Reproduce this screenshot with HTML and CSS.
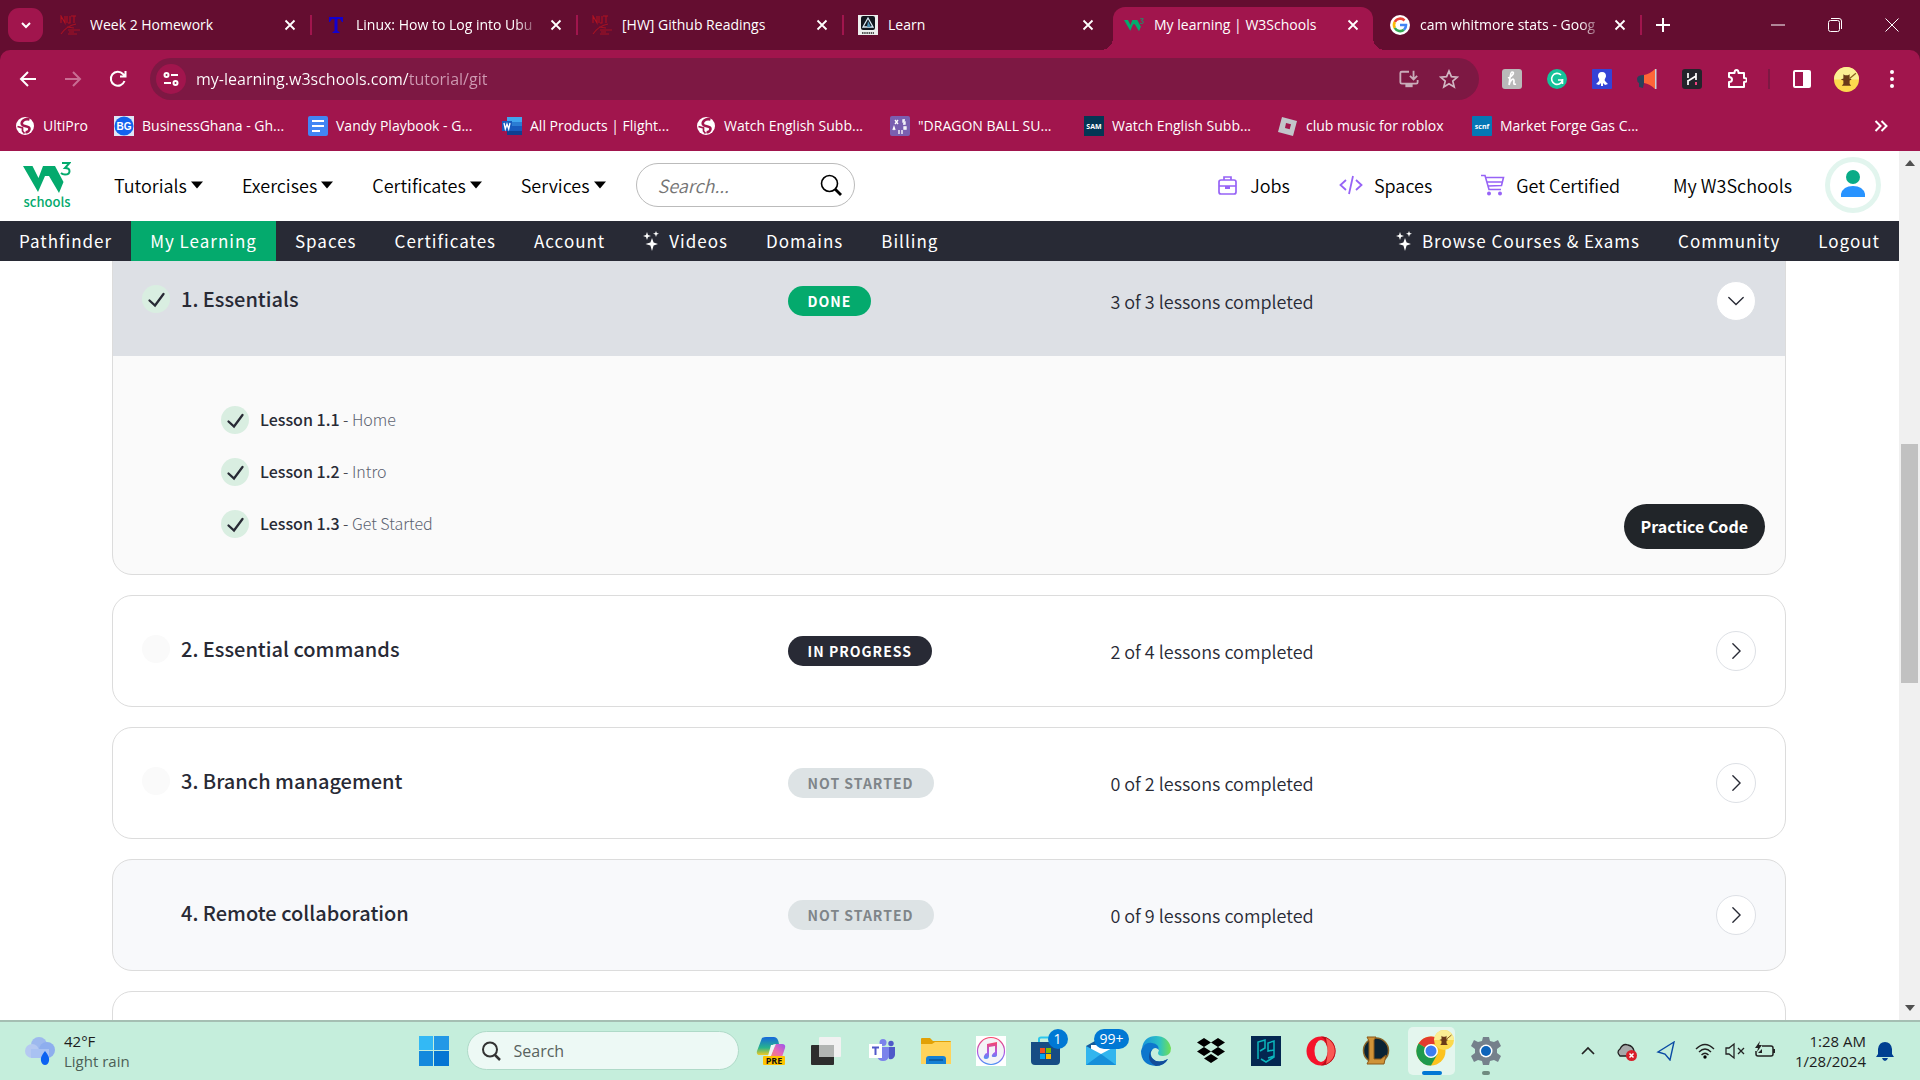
FILE: index.html
```html
<!DOCTYPE html>
<html lang="en">
<head>
<meta charset="utf-8">
<title>My learning | W3Schools</title>
<link rel="stylesheet" href="styles.css">
</head>
<body>
<svg class="defs" aria-hidden="true">
  <symbol id="close" viewBox="0 0 12 12"><path d="M1.5 1.5l9 9M10.500 1.500l-9 9" stroke="#fff" stroke-width="1.8" fill="none"/></symbol>
  <symbol id="check" viewBox="0 0 28 28"><circle cx="14" cy="14" r="14" fill="#d9eee1"/><path d="M7.500 15.500l5.500 5 8.500-11.500" stroke="#282a35" stroke-width="2.300" fill="none" stroke-linecap="round"/></symbol>
  <symbol id="right" viewBox="0 0 20 20"><path d="M6.500 2l8 8-8 8" stroke="#282a35" stroke-width="1.500" fill="none" stroke-linecap="round"/></symbol>
  <symbol id="down" viewBox="0 0 20 20"><path d="M2 6l8 8 8-8" stroke="#282a35" stroke-width="1.500" fill="none" stroke-linecap="round"/></symbol>
  <symbol id="caret" viewBox="0 0 12 8"><path d="M0 .5h12L6 7.500z"/></symbol>
  <symbol id="sparkle" viewBox="0 0 16 20"><path d="M9 7l1.600 4.400L15 13l-4.400 1.600L9 20l-1.600-5.400L2.500 13l4.900-1.600zM4 1l1 3 3 1-3 1-1 3-1-3-3-1 3-1zM13 0l.8 2 2.200.8-2.200.8L13 6l-.8-2.400L10 2.800l2.200-.8z" fill="#fff"/></symbol>
  <symbol id="globe" viewBox="0 0 20 20"><circle cx="10" cy="10" r="9" fill="#fff"/><path d="M14.500 3.500C9 2 6 6 7 8.500s8 1 7.500 4.500c-.3 2-2 3.500-4 3" stroke="#a1154d" stroke-width="2.600" fill="none"/><path d="M2.500 10.500l5 1.500v3l2 2.500" stroke="#a1154d" stroke-width="1.700" fill="none"/></symbol>
  <symbol id="njit" viewBox="0 0 20 20"><path d="M1 8V1l4 7V1M7 1v7M10 1v7H8M11 1h5M14 1v7" stroke="#b01221" stroke-width="1.100" fill="none"/><path d="M1 19C6 12 10 10 16 9M7 12l7 1M8 15l12 0M8 19h9M9 17h5" stroke="#a51222" stroke-width="1.100" fill="none"/></symbol>
  <symbol id="w3" viewBox="0 0 48 32"><path d="M0 4h9.500l6 12 4.500-12h12l8.500 16-4.500 11L26 14h-4L15 30z"/><path d="M39 1h7.500L42 6q4.500 0 4.500 3.200T42 12.500q-2.500 0-4-1.500" fill="none" stroke="#04aa6d" stroke-width="2"/></symbol>
  <symbol id="beaver" viewBox="0 0 24 24"><circle cx="12" cy="12" r="12" fill="#fcd94d"/><path d="M0 12a12 12 0 0 1 24 0z" fill="#fbef94"/><path d="M9 7l1.500 1h3L15 7v4l2 1-2 1v3l1.500 2h-9L9 16v-3l-2.500-1L9 11z" fill="#693a18"/><path d="M15 11l6-5" stroke="#8c6120" stroke-width="1.200"/></symbol>
</svg>

<header class="browser">
  <div class="tabstrip">
    <button class="tabsearch" aria-label="Search tabs"><svg viewBox="0 0 12 12" width="12" height="12"><path d="M2 4l4 4 4-4" stroke="#fff" stroke-width="2" fill="none"/></svg></button>
    <div class="tab"><svg class="fav"><use href="#njit"/></svg><span class="tabtitle">Week 2 Homework</span><button class="x" aria-label="Close tab"><svg><use href="#close"/></svg></button></div>
    <div class="tab"><svg class="fav" viewBox="0 0 20 20"><path d="M3 2h14v5h-1l-2-3h-2.500v12l2 1v1h-7v-1l2-1V4H6L4 7H3z" fill="#1200d0"/></svg><span class="tabtitle fade">Linux: How to Log into Ubu</span><button class="x" aria-label="Close tab"><svg><use href="#close"/></svg></button></div>
    <div class="tab"><svg class="fav"><use href="#njit"/></svg><span class="tabtitle">[HW] Github Readings</span><button class="x" aria-label="Close tab"><svg><use href="#close"/></svg></button></div>
    <div class="tab before"><svg class="fav" viewBox="0 0 20 20"><path fill="#eee" d="M0 0h20v20H0z"/><rect x="3" y="1" width="14" height="14" rx="2" fill="#11161e"/><path d="M10 3l5 9H5z" fill="none" stroke="#d8e9f4" stroke-width="1.300"/><path d="M10 6l3 6h-4z" fill="#4b91b7"/><path d="M4 18h12" stroke="#222" stroke-width="1.500" stroke-dasharray="1.500 .7"/></svg><span class="tabtitle">Learn</span><button class="x" aria-label="Close tab"><svg><use href="#close"/></svg></button></div>
    <div class="tab active"><svg class="fav green"><use href="#w3"/></svg><span class="tabtitle">My learning | W3Schools</span><button class="x" aria-label="Close tab"><svg><use href="#close"/></svg></button></div>
    <div class="tab"><svg class="fav" viewBox="0 0 20 20"><circle cx="10" cy="10" r="10" fill="#fff"/><g fill="none" stroke-width="2.600"><path d="M14.500 5.500A6 6 0 0 0 4.800 7" stroke="#ea4335"/><path d="M4.800 7a6 6 0 0 0 0 6" stroke="#fbbc05"/><path d="M4.800 13a6 6 0 0 0 9.200 1.700" stroke="#34a853"/><path d="M14 14.700A6 6 0 0 0 16 10h-6" stroke="#4285f4"/></g></svg><span class="tabtitle fade">cam whitmore stats - Goog</span><button class="x" aria-label="Close tab"><svg><use href="#close"/></svg></button></div>
    <button class="newtab" aria-label="New tab"><svg viewBox="0 0 14 14" width="14" height="14"><path d="M7 0v14M0 7h14" stroke="#fff" stroke-width="2"/></svg></button>
    <div class="winbtns">
      <button aria-label="Minimize"><svg viewBox="0 0 14 14"><path d="M0 7h14" stroke="#fff"/></svg></button>
      <button aria-label="Restore"><svg viewBox="0 0 14 14"><rect x=".5" y="2.500" width="11" height="11" rx="2" fill="none" stroke="#fff"/><path d="M3 .5h8a2.500 2.500 0 0 1 2.500 2.500v8" fill="none" stroke="#fff"/></svg></button>
      <button aria-label="Close"><svg viewBox="0 0 14 14"><path d="M.5.500l13 13M13.500.500l-13 13" stroke="#fff"/></svg></button>
    </div>
  </div>

  <div class="toolbar">
    <button aria-label="Back"><svg viewBox="0 0 20 20"><path d="M18 10H4M10 3l-7 7 7 7" stroke="#fff" stroke-width="2" fill="none"/></svg></button>
    <button aria-label="Forward"><svg viewBox="0 0 20 20"><path d="M2 10h14M10 3l7 7-7 7" stroke="#c96d93" stroke-width="2" fill="none"/></svg></button>
    <button aria-label="Reload"><svg viewBox="0 0 20 20"><path d="M16.500 12A7 7 0 1 1 15 5l2 2M17.500 2v5.500H12" stroke="#fff" stroke-width="2" fill="none"/></svg></button>
    <div class="omnibox">
      <button class="siteinfo" aria-label="Site information"><svg viewBox="0 0 16 16" width="16" height="16"><g fill="none" stroke="#fff" stroke-width="2"><circle cx="3.500" cy="4" r="2"/><path d="M8 4h7M1 12h7"/><circle cx="12.500" cy="12" r="2"/></g></svg></button>
      <input class="url" type="text" aria-label="Address" value="my-learning.w3schools.com/tutorial/git">
      <button aria-label="Install"><svg viewBox="0 0 22 20"><path d="M11 2H3q-1.500 0-1.500 1.500v10Q1.500 15 3 15h16q1.500 0 1.500-1.500V11" stroke="#c9abb9" stroke-width="2" fill="none"/><path d="M7 15h8v4H7z" fill="#c9abb9"/><path d="M16 1v9M12 6.500l4 4 4-4" stroke="#c9abb9" stroke-width="2" fill="none"/></svg></button>
      <button aria-label="Bookmark"><svg viewBox="0 0 20 20"><path d="M10 2l2.400 5.600 6 .5-4.600 4 1.400 5.900-5.200-3.200L4.800 18l1.400-5.900-4.600-4 6-.5z" stroke="#d1b6c2" stroke-width="1.700" fill="none"/></svg></button>
    </div>
    <div class="exts">
      <button aria-label="Honey"><svg viewBox="0 0 20 20"><rect width="20" height="20" rx="3" fill="#b9b9b9"/><path d="M6 9c5-2 7-6 4-6-2 0-2 8-3 13 1-5 5-8 5-4 0 2-1 4 2 3" stroke="#fff" stroke-width="1.700" fill="none"/></svg></button>
      <button aria-label="Grammarly"><svg viewBox="0 0 20 20"><circle cx="10" cy="10" r="10" fill="#15c39a"/><path d="M14 6A5.500 5.500 0 1 0 15.500 11H11M15.500 10v5" stroke="#fff" stroke-width="1.600" fill="none"/></svg></button>
      <button aria-label="Octopus"><svg viewBox="0 0 20 20"><rect width="20" height="20" rx="1" fill="#3443d6"/><path d="M10 3c-3 0-4 2-4 4s2 3 1 5l-3 3 3 1 2-2v3h2v-3l2 2 3-1-3-3c-1-2 1-3 1-5s-1-4-4-4z" fill="#fff"/></svg></button>
      <button aria-label="Announcements"><svg viewBox="0 0 20 20"><path d="M0 10q0-4 7-4v8l-1 5-4-1v-4q-2-1-2-4z" fill="#29415a"/><path d="M7 6q6-1 11-6v20q-5-5-11-6z" fill="#ff6537"/><path d="M18 0h1.500v20H18z" fill="#c8d3dc"/></svg></button>
      <button aria-label="Highlighter"><svg viewBox="0 0 20 20"><rect width="20" height="20" rx="3" fill="#23242b"/><path d="M6 4v5M6 11v5M14 4v7M6 12l8-5" stroke="#fff" stroke-width="1.700"/><path d="M14 13v3" stroke="#ef4381" stroke-width="2"/></svg></button>
      <button aria-label="Extensions"><svg viewBox="0 0 20 20"><path d="M2 4h5.500q0-3 2-3t2 3H17v5q3 0 3 2t-3 2v5H2v-5q3 0 3-2.500T2 8z" stroke="#fff" stroke-width="2" fill="none" stroke-linejoin="round"/></svg></button>
      <i class="vsep"></i>
      <button aria-label="Side panel"><svg viewBox="0 0 20 20"><rect x="2" y="2" width="16" height="16" rx="1" stroke="#fff" stroke-width="2" fill="none"/><path d="M11 2h7v16h-7z" fill="#fff"/></svg></button>
      <button class="profile" aria-label="Profile"><svg><use href="#beaver"/></svg></button>
      <button aria-label="Menu"><svg viewBox="0 0 20 20" fill="#fff"><circle cx="10" cy="3" r="2"/><circle cx="10" cy="10" r="2"/><circle cx="10" cy="17" r="2"/></svg></button>
    </div>
  </div>

  <nav class="bookmarks" aria-label="Bookmarks">
    <a class="short" href="#"><svg><use href="#globe"/></svg>UltiPro</a>
    <a href="#"><svg viewBox="0 0 20 20"><path fill="#dfe6f5" d="M0 0h20v20H0z"/><circle cx="10" cy="10" r="9.500" fill="#1263ee"/><text x="10" y="14" text-anchor="middle" class="bg">BG</text></svg>BusinessGhana - Gh...</a>
    <a href="#"><svg viewBox="0 0 20 20"><rect width="20" height="20" rx="2" fill="#4285f4"/><path d="M4 5h12M4 10h12M4 15h8" stroke="#fff" stroke-width="2.200"/></svg>Vandy Playbook - G...</a>
    <a href="#"><svg viewBox="0 0 20 20"><path fill="#41a5ee" d="M5 1h15v5H5z"/><path fill="#2b7cd3" d="M5 6h15v4H5z"/><path fill="#185abd" d="M5 10h15v5H5z"/><path fill="#103f91" d="M5 15h15v4H5z"/><path fill="#185abd" d="M0 5h10v10H0z"/><path d="M2 7l1.300 6L5 8l1.700 5L8 7" stroke="#fff" stroke-width="1.300" fill="none"/></svg>All Products | Flight...</a>
    <a href="#"><svg><use href="#globe"/></svg>Watch English Subb...</a>
    <a href="#"><svg viewBox="0 0 20 20"><rect width="20" height="20" rx="2" fill="#7a5fb0"/><path d="M5 4l3 4M8 4L5 8M15 4h-2v2h2v2h-2M3 14l1-3 1 3M14 11h2v2h-2zM9 14v4M12 14v4" stroke="#fff" stroke-width="1.300" fill="none"/></svg>"DRAGON BALL SU...</a>
    <a href="#"><svg viewBox="0 0 20 20"><path fill="#043654" d="M0 0h20v20H0z"/><text x="10" y="13" text-anchor="middle" class="sam">SAM</text></svg>Watch English Subb...</a>
    <a href="#"><svg viewBox="0 0 20 20"><path d="M4 1l15 4-4 15-15-4z" fill="#c2c5ca"/><path d="M8 7l5 1.300-1.300 5L7 12z" fill="#a1154d"/></svg>club music for roblox</a>
    <a href="#"><svg viewBox="0 0 20 20"><rect width="20" height="20" rx="1" fill="#0577b5"/><text x="10" y="13" text-anchor="middle" class="sam">scnf</text></svg>Market Forge Gas C...</a>
    <button class="more" aria-label="More bookmarks"><svg viewBox="0 0 14 12" width="14" height="12"><path d="M1.500 1l5 5-5 5M7.500 1l5 5-5 5" stroke="#fff" stroke-width="2" fill="none"/></svg></button>
  </nav>
</header>

<div class="viewport">
  <div class="page">
    <nav class="topnav" aria-label="Main">
      <a class="logo" href="#" aria-label="W3Schools"><svg width="48" height="32"><use href="#w3"/></svg><span>schools</span></a>
      <button class="menu">Tutorials<svg><use href="#caret"/></svg></button>
      <button class="menu">Exercises<svg><use href="#caret"/></svg></button>
      <button class="menu">Certificates<svg><use href="#caret"/></svg></button>
      <button class="menu">Services<svg><use href="#caret"/></svg></button>
      <label class="search"><input type="text" placeholder="Search..." aria-label="Search W3Schools"><svg viewBox="0 0 22 22" width="22" height="22"><circle cx="9.500" cy="9.500" r="8" fill="none" stroke="#000" stroke-width="1.600"/><path d="M15 15l6 6" stroke="#000" stroke-width="2.800"/></svg></label>
      <div class="links">
        <a href="#"><svg viewBox="0 0 22 22" width="22" height="22"><g fill="none" stroke="#9763f6" stroke-width="1.700"><rect x="2" y="6" width="17" height="14" rx="2"/><path d="M7 6V3h7v3M2 12h17"/></g><path d="M8 12h5v3H8z" fill="#9763f6"/></svg>Jobs</a>
        <a href="#"><svg viewBox="0 0 24 20" width="24" height="22"><path d="M7 5L1.500 10 7 15M17 5l5.500 5-5.500 5M14 1l-4 18" fill="none" stroke="#9763f6" stroke-width="1.800"/></svg>Spaces</a>
        <a href="#"><svg viewBox="0 0 24 22" width="24" height="22"><path d="M0 1.500h4l4 14h12M5 3.500h17.500l-2 8L7 12M6 8h15" fill="none" stroke="#9763f6" stroke-width="1.600"/><circle cx="8" cy="19.500" r="2" fill="#9763f6"/><circle cx="19" cy="19.500" r="2" fill="#9763f6"/></svg>Get Certified</a>
        <a class="mine" href="#">My W3Schools</a>
        <a class="avatar" href="#" aria-label="Profile"><svg viewBox="0 0 56 56" width="56" height="56"><circle cx="28" cy="28" r="25.500" fill="#fff" stroke="#e2f5ee" stroke-width="5"/><circle cx="28" cy="20" r="7" fill="#09ab87"/><path d="M16 40v-3q2-8 12-8t12 8v3z" fill="#2893ff"/></svg></a>
      </div>
    </nav>
    <nav class="subnav" aria-label="Account">
      <a href="#">Pathfinder</a><a class="on" href="#">My Learning</a><a href="#">Spaces</a><a href="#">Certificates</a><a href="#">Account</a><a href="#"><svg><use href="#sparkle"/></svg>Videos</a><a href="#">Domains</a><a href="#">Billing</a>
      <a class="push" href="#"><svg><use href="#sparkle"/></svg>Browse Courses &amp; Exams</a><a href="#">Community</a><a href="#">Logout</a>
    </nav>
    <main class="content">
      <div class="modules">
        <section class="card open">
          <div class="row"><h2><svg><use href="#check"/></svg>1. Essentials</h2><span class="badge done">DONE</span><p>3 of 3 lessons completed</p><button class="toggle" aria-label="Collapse"><svg><use href="#down"/></svg></button></div>
          <div class="body">
            <ul>
              <li><svg><use href="#check"/></svg><a href="#"><b>Lesson 1.1</b> - <span>Home</span></a></li>
              <li><svg><use href="#check"/></svg><a href="#"><b>Lesson 1.2</b> - <span>Intro</span></a></li>
              <li><svg><use href="#check"/></svg><a href="#"><b>Lesson 1.3</b> - <span>Get Started</span></a></li>
            </ul>
            <button class="practice">Practice Code</button>
          </div>
        </section>
        <section class="card"><div class="row"><h2><i class="dot"></i>2. Essential commands</h2><span class="badge progress">IN PROGRESS</span><p>2 of 4 lessons completed</p><button class="toggle" aria-label="Expand"><svg><use href="#right"/></svg></button></div></section>
        <section class="card"><div class="row"><h2><i class="dot"></i>3. Branch management</h2><span class="badge">NOT STARTED</span><p>0 of 2 lessons completed</p><button class="toggle" aria-label="Expand"><svg><use href="#right"/></svg></button></div></section>
        <section class="card hover"><div class="row"><h2><i class="dot"></i>4. Remote collaboration</h2><span class="badge">NOT STARTED</span><p>0 of 9 lessons completed</p><button class="toggle" aria-label="Expand"><svg><use href="#right"/></svg></button></div></section>
        <section class="card"><div class="row"></div></section>
      </div>
    </main>
  </div>
  <div class="scrollbar">
    <svg viewBox="0 0 10 6"><path d="M0 6l5-6 5 6z" fill="#505050"/></svg>
    <div class="track"><div class="thumb"></div></div>
    <svg viewBox="0 0 10 6"><path d="M0 0h10L5 6z" fill="#505050"/></svg>
  </div>
</div>

<footer class="taskbar">
  <div class="weather">
    <svg viewBox="0 0 30 28" width="30" height="28"><circle cx="14" cy="8" r="8" fill="#9db9ee"/><circle cx="7" cy="14" r="7" fill="#b5c9f1"/><circle cx="22" cy="13" r="8" fill="#8eaeee"/><path d="M6 12h18v9H6z" fill="#a9c2f2"/><path d="M20 14q5 6 4 10t-4 4-4-4 4-10z" fill="#0c62f2"/></svg>
    <div><span>42°F</span><span class="sub">Light rain</span></div>
  </div>
  <div class="apps">
    <button class="app" aria-label="Start"><svg viewBox="0 0 30 30"><path d="M0 0h14v14H0z" fill="#33b9f5"/><path d="M15 0h15v14H15z" fill="#2398e6"/><path d="M0 15h14v15H0z" fill="#1489dd"/><path d="M15 15h15v15H15z" fill="#0475d3"/></svg></button>
    <label class="tasksearch"><svg viewBox="0 0 20 20" width="20" height="20"><circle cx="9" cy="8.500" r="7" fill="none" stroke="#333" stroke-width="2"/><path d="M14 14l5 5" stroke="#333" stroke-width="2.500"/></svg><input type="text" placeholder="Search" aria-label="Search Windows"></label>
    <button class="app" aria-label="Copilot"><svg viewBox="0 0 30 30"><defs><linearGradient id="cp" x1="0" y1="0" x2="0" y2="1"><stop offset="0" stop-color="#1567dc"/><stop offset=".6" stop-color="#28b48c"/><stop offset="1" stop-color="#f3ca22"/></linearGradient><linearGradient id="cq" x1="1" y1="0" x2="0" y2="1"><stop offset="0" stop-color="#9a54ee"/><stop offset=".5" stop-color="#ec6bb0"/><stop offset="1" stop-color="#f88e5a"/></linearGradient></defs><path d="M6 2Q8 1 10 1h8q4 0 5 7h-4q-3 0-4 4l-2 7H4q-4 0-3-4z" fill="url(#cp)"/><path d="M20 8h6q4 0 3 4l-3 9-13 2z" fill="url(#cq)"/><path d="M15 9h4l-4 11h-3z" fill="#eef7f4"/><rect x="7" y="20" width="22" height="9" rx="1" fill="#ffc400"/><text x="18" y="28" text-anchor="middle" class="pre">PRE</text></svg></button>
    <button class="app" aria-label="Task view"><svg viewBox="0 0 30 30"><rect x="0" y="9" width="23" height="20" rx="1" fill="#2d2d2d"/><rect x="8" y="1" width="22" height="20" rx="1" fill="#f1f1f1"/><path d="M8 9h15v12H8z" fill="#b2b5b3"/></svg></button>
    <button class="app" aria-label="Teams"><svg viewBox="0 0 30 30"><circle cx="17" cy="6.500" r="3.500" fill="#7b83eb"/><circle cx="25" cy="7.500" r="2.700" fill="#5059c9"/><path d="M20 11h9v8q-1 5-6 4z" fill="#5059c9"/><path d="M11 11h12v9q-1 5-6 5t-6-5z" fill="#7b83eb"/><path d="M3 8h13v14H3z" fill="#fff"/><path d="M6 11.500h7M9.500 11v8" stroke="#5059c9" stroke-width="2"/></svg></button>
    <button class="app" aria-label="File Explorer"><svg viewBox="0 0 30 30"><path d="M0 3q0-1 1-1h8l3 3h17q1 0 1 1v8H0z" fill="#e2a106"/><path d="M0 8h11l3-2h16v22H0z" fill="#ffd35a"/><path d="M5 28v-5q0-3 3-3h14q3 0 3 3v5z" fill="#1580d4"/><path d="M8 24h14" stroke="#0b5597" stroke-width="1.500"/></svg></button>
    <button class="app" aria-label="iTunes"><svg viewBox="0 0 30 30"><defs><linearGradient id="it" x1="0" y1="0" x2="0" y2="1"><stop offset="0" stop-color="#fa4568"/><stop offset=".6" stop-color="#a95dea"/><stop offset="1" stop-color="#4b92f4"/></linearGradient></defs><path fill="#fff" d="M0 0h30v30H0z"/><circle cx="15" cy="15" r="13.500" fill="#f4f4f7" stroke="url(#it)" stroke-width="1.200"/><path d="M11 8l10-2v13q0 2-3 2t-2-2 3-3v-6l-6 1v9q0 3-3 3t-2-3 3-3z" fill="url(#it)"/></svg></button>
    <button class="app" aria-label="Microsoft Store"><svg viewBox="0 0 30 30"><path d="M8 8V3q0-1.500 2-1.500h10v6" fill="none" stroke="#2cc7ed" stroke-width="2"/><path d="M0 6h29v19q0 4-4 4H4q-4 0-4-4z" fill="#174c84"/><path d="M9 12h5v5H9z" fill="#f25022"/><path d="M15 12h5v5h-5z" fill="#7fba00"/><path d="M9 18h5v5H9z" fill="#00a4ef"/><path d="M15 18h5v5h-5z" fill="#ffb900"/></svg><span class="count">1</span></button>
    <button class="app" aria-label="Mail"><svg viewBox="0 0 30 30"><path d="M0 10l9-5h14l7 5v4H0z" fill="#155b9b"/><path d="M5 9h20v12H5z" fill="#fff"/><path d="M0 10l15 8 15-8v19H0z" fill="#32b5ee"/><path d="M0 29h30L15 18z" fill="#168fd9"/></svg><span class="count wide">99+</span></button>
    <button class="app" aria-label="Edge"><svg viewBox="0 0 30 30"><defs><linearGradient id="ed"><stop offset="0" stop-color="#1793dc"/><stop offset=".6" stop-color="#2dc2c4"/><stop offset="1" stop-color="#71e052"/></linearGradient></defs><path d="M1 12Q3 0 15 0t15 12q0 8-8 8-5 0-5-3l1-3q-1-5-7-5Q3 9 1 12z" fill="url(#ed)"/><path d="M1 12Q5 6 11 7q7 1 7 7-4-4-7 0t1 9q5 5 15 0-4 7-12 7Q0 29 0 15z" fill="#0d76cd"/><path d="M11 14q-4 4 1 9 5 5 15 0-4 7-12 7-7-3-7-9t3-7z" fill="#124c9a"/></svg></button>
    <button class="app" aria-label="Dropbox"><svg viewBox="0 0 30 30"><path d="M8 2l7 4.500L8 11 1 6.500zM22 2l7 4.500-7 4.500-7-4.500zM8 11l7 4.500L8 20l-7-4.500zM22 11l7 4.500-7 4.500-7-4.500zM15 18l7 4.500-7 4.500-7-4.500z"/></svg></button>
    <button class="app" aria-label="PG"><svg viewBox="0 0 30 30"><path fill="#042751" d="M0 0h30v30H0z"/><path d="M7 23V6l7-2v8l-5 3M23 14l-6 1V7l6-2v16l-8 5-5-3M23 20l-6 2" fill="none" stroke="#0bb6bd" stroke-width="1.500"/></svg></button>
    <button class="app" aria-label="Opera"><svg viewBox="0 0 30 30"><ellipse cx="15" cy="15" rx="14.500" ry="14.500" fill="#f5132b"/><path d="M15 .5a14.500 14.500 0 0 1 0 29q6-3 6-14.500T15 .5z" fill="#b80d18"/><path d="M20 2a14 14 0 0 1 0 26q3-13 0-26z" fill="#fa5a55"/><ellipse cx="15" cy="15" rx="6.500" ry="11" fill="#c5eedc"/></svg></button>
    <button class="app" aria-label="League of Legends"><svg viewBox="0 0 30 30"><circle cx="15" cy="14.500" r="12.500" fill="#0a2434" stroke="#8a6428" stroke-width="1.500"/><path d="M6 1h9l-2 3v19h7l5-4-2 9H6l2-4V5z" fill="#cf9338" stroke="#8a5919"/></svg></button>
    <button class="app current" aria-label="Chrome"><svg viewBox="0 0 30 30"><circle cx="15" cy="15" r="14.500" fill="#fcc31e"/><path d="M15 15L2.500 7.500A14.500 14.500 0 0 1 27.500 8H15z" fill="#e33b2e"/><path d="M15 15L2.500 7.500A14.500 14.500 0 0 0 15 29.500L21.500 18z" fill="#1f9a4c"/><circle cx="15" cy="15" r="7" fill="#fff"/><circle cx="15" cy="15" r="5.500" fill="#3d7df0"/></svg><svg class="who"><use href="#beaver"/></svg></button>
    <button class="app idle" aria-label="Settings"><svg viewBox="0 0 30 30"><path d="M12 1h6l1 4 4 1 4-2 3 6-4 3v4l4 3-3 6-4-2-4 1-1 4h-6l-1-4-4-1-4 2-3-6 4-3v-4l-4-3 3-6 4 2 4-1z" fill="#75808b"/><circle cx="15" cy="15" r="6.500" fill="#fff"/><circle cx="15" cy="15" r="5" fill="#0d63ba"/></svg></button>
  </div>
  <div class="tray">
    <svg viewBox="0 0 20 20"><path d="M4 13l6-6 6 6" fill="none" stroke="#222" stroke-width="1.700"/></svg>
    <svg viewBox="0 0 20 20"><path d="M3 15q-4-4 0-7 3-6 8-4 5 1 6 6v5z" fill="#a7a9a9" stroke="#222" stroke-width="1.300"/><circle cx="14.500" cy="14.500" r="5.500" fill="#d9202a"/><path d="M12.500 12.500l4 4M16.500 12.500l-4 4" stroke="#fff" stroke-width="1.500"/></svg>
    <svg viewBox="0 0 20 20"><path d="M18 1L2 11l7 2 5 6z" fill="none" stroke="#0b4ba4" stroke-width="1.400"/></svg>
    <div class="status">
      <svg viewBox="0 0 20 20"><g fill="none" stroke="#222" stroke-width="1.400"><path d="M1 8q9-9 18 0M4 11q6-6 12 0M6.500 14q3.500-3.500 7 0"/></g><circle cx="10" cy="16" r="1.700"/></svg>
      <svg viewBox="0 0 20 20"><path d="M1 7h3l5-4v14l-5-4H1zM13 7l6 6M19 7l-6 6" fill="none" stroke="#222" stroke-width="1.300"/></svg>
      <svg viewBox="0 0 20 20"><path d="M7 5h9q2 0 2 2v6q0 2-2 2H3q-2 0-2-2v-3" fill="none" stroke="#222" stroke-width="1.500"/><path d="M18 8h2v4h-2zM5 0L0 7h3l-1 4 5-7H4zM3 12h4V8z" fill="#222"/></svg>
    </div>
    <div class="clock"><span>1:28 AM</span><span>1/28/2024</span></div>
    <svg viewBox="0 0 20 20"><path d="M3 13V8q1-7 7-7t7 7v5l2 3H1zM7 17h6q-1 3-3 3t-3-3z" fill="#003f91"/></svg>
  </div>
</footer>
</body>
</html>
```
FILE: styles.css
```css
* { box-sizing: border-box; }
body {
  margin: 0;
  height: 100vh;
  display: flex;
  flex-direction: column;
  overflow: hidden;
  font: 14px/20px "Open Sans", "Noto Sans", sans-serif;
  color: #282a35;
}
button {
  border: 0;
  padding: 0;
  background: none;
  color: inherit;
  font: inherit;
  display: flex;
  align-items: center;
  justify-content: center;
}
input { border: 0; padding: 0; background: none; font: inherit; outline: 0; min-width: 0; }
a { color: inherit; text-decoration: none; }
svg { flex: none; display: block; }
.defs { width: 0; height: 0; position: absolute; }

/* Browser frame */
.browser { background: #640d30; color: #fff; flex: none; }
.tabstrip { display: flex; height: 50px; padding-left: 8px; }
.tabsearch { width: 35px; height: 34px; margin: 8px 3px 0 0; border-radius: 11px; background: #a1154d; }
.tab {
  flex: 0 1 266px;
  min-width: 0;
  display: flex;
  align-items: center;
  gap: 10px;
  padding: 0 16px 0 14px;
  position: relative;
}
.tab::after {
  content: "";
  position: absolute;
  right: 0;
  top: 15px;
  width: 2px;
  height: 20px;
  background: #a1154d;
}
.tab.before::after { display: none; }
.tab.active {
  flex-basis: 260px;
  margin: 7px 3px 0;
  padding: 0 14px 7px 11px;
  border-radius: 12px 12px 0 0;
  background: #a1154d;
}
/* Flared feet of the active tab */
.tab.active::before, .tab.active::after {
  content: "";
  position: absolute;
  top: auto;
  bottom: 0;
  width: 12px;
  height: 12px;
}
.tab.active::before { left: -12px; background: radial-gradient(circle at 0 0, transparent 12px, #a1154d 12px); }
.tab.active::after { right: -12px; background: radial-gradient(circle at 100% 0, transparent 12px, #a1154d 12px); }
.fav { width: 20px; height: 20px; }
.green { fill: #04aa6d; }
.tabtitle { flex: 1; min-width: 0; overflow: hidden; white-space: nowrap; }
.fade { -webkit-mask-image: linear-gradient(to left, transparent, #000 24px); mask-image: linear-gradient(to left, transparent, #000 24px); }
.x svg { width: 12px; height: 12px; }
.newtab { width: 42px; }
.winbtns { margin-left: auto; display: flex; }
.winbtns button { width: 57px; }
.winbtns svg { width: 14px; height: 14px; }

.toolbar { display: flex; align-items: center; height: 58px; padding: 0 6px 0 5px; border-radius: 10px 10px 0 0; background: #a1154d; }
.toolbar svg { width: 20px; height: 20px; }
.toolbar > button { width: 45px; height: 40px; }
.omnibox {
  flex: 1;
  display: flex;
  align-items: center;
  height: 42px;
  margin: 0 10px 0 10px;
  padding: 0 10px 0 6px;
  border-radius: 21px;
  background: #7d1843;
}
.omnibox > button { width: 40px; }
.omnibox > .siteinfo { width: 30px; height: 30px; border-radius: 15px; background: #a1154d; margin-right: 10px; }
.omnibox .siteinfo svg { width: 16px; height: 16px; }
.url {
  flex: 1;
  font-size: 16px;
  height: 30px;
  color: #d7a9be;
  background: linear-gradient(to right, #fff 213px, #cf9bb3 213px);
  -webkit-background-clip: text;
  background-clip: text;
  -webkit-text-fill-color: transparent;
}
.exts { display: flex; align-items: center; }
.exts button { width: 45px; }
.exts .profile svg { width: 25px; height: 25px; }
.vsep { width: 2px; height: 20px; margin: 0 9px; background: #7d1843; }

.bookmarks { display: flex; align-items: center; height: 43px; padding: 0 15px 8px; background: #a1154d; }
.bookmarks a { width: 194px; display: flex; align-items: center; gap: 8px; white-space: nowrap; }
.bookmarks a.short { width: 99px; }
.bookmarks a svg { width: 20px; height: 20px; }
.bookmarks .more { margin-left: auto; width: 48px; height: 30px; }
.bg { font: bold 10px "Liberation Sans", sans-serif; fill: #fff; }
.sam { font: bold 7px "Open Sans", sans-serif; fill: #fff; }
.pre { font: bold 9px "Open Sans", sans-serif; fill: #111; }

/* Web page */
.viewport { flex: 1; min-height: 0; display: flex; background: #fff; }
.page {
  flex: 1;
  min-width: 0;
  display: flex;
  flex-direction: column;
  font: 17px/24px "Noto Sans CJK SC", "Noto Sans", sans-serif;
}
.topnav { flex: none; display: flex; align-items: center; height: 70px; padding: 0 18px 2px 23px; color: #000; font-size: 18px; font-weight: 350; }
.logo { width: 48px; margin-right: 43px; fill: #04aa6d; color: #04aa6d; text-align: center; font-size: 13px; line-height: 15px; font-weight: 500; }
.logo span { display: block; }
.menu { gap: 4px; margin-right: 39px; }
.menu svg { width: 12px; height: 8px; }
.search { display: flex; align-items: center; width: 219px; height: 44px; padding: 0 12px 0 21px; margin-left: -9px; border: 1px solid #bbb; border-radius: 22px; }
.search input { flex: 1; font-style: italic; }
.search input::placeholder { color: #757575; opacity: 1; }
.links { margin-left: auto; display: flex; align-items: center; gap: 49px; }
.links a { display: flex; align-items: center; gap: 11px; }
.links .mine { margin-left: 4px; }
.links .avatar { margin-left: -16px; }
.subnav { flex: none; display: flex; height: 40px; background: #282a35; color: #fff; letter-spacing: 1px; }
.subnav a { display: flex; align-items: center; gap: 10px; padding: 0 19px 1px; }
.subnav svg { width: 16px; height: 20px; }
.subnav .on { background: #04aa6d; }
.subnav .push { margin-left: auto; }

.content { flex: 1; min-height: 0; overflow: hidden; padding: 0 113px 0 112px; }
/* Scrolled a little past the top of the first module */
.modules { margin-top: -16px; display: flex; flex-direction: column; gap: 20px; }
.card { flex: none; border: 1px solid #dcdcdc; border-radius: 20px; background: #fff; overflow: hidden; }
.card.hover, .card.hover .dot { background: #f8f9fb; }
.card.open { border-radius: 0 0 20px 20px; background: #fafafa; }
.open .row { background: #dde0e5; }
.row {
  display: grid;
  grid-template-columns: 2fr 1fr 2fr;
  align-items: center;
  height: 110px;
  padding: 0 29px;
}
.row h2 { display: flex; align-items: center; gap: 11px; margin: 0; padding-bottom: 4px; font-size: 20px; line-height: 28px; font-weight: 500; }
.row h2 svg, .dot { width: 28px; height: 28px; }
.dot { border-radius: 14px; background: #fafafa; }
.badge { justify-self: start; padding: 3px 20px; border-radius: 15px; background: #dde3e5; color: #7f8589; font-size: 14px; font-weight: 700; letter-spacing: 1px; }
.badge.done { background: #04aa6d; color: #fff; }
.badge.progress { background: #282a35; color: #fff; }
.row p { grid-column: 3; grid-row: 1; margin: 0; font-size: 18px; font-weight: 350; }
.toggle { grid-column: 3; grid-row: 1; justify-self: end; width: 40px; height: 40px; border: 1px solid #dde0e5; border-radius: 20px; background: #fff; }
.toggle svg { width: 18px; height: 18px; }
.body { display: flex; justify-content: space-between; align-items: flex-end; height: 218px; padding: 50px 20px 25px 108px; }
.body ul { align-self: flex-start; list-style: none; margin: 0; padding: 0; display: flex; flex-direction: column; gap: 24px; font-size: 16px; font-weight: 300; }
.body li { display: flex; align-items: center; gap: 11px; height: 28px; }
.body li svg { width: 28px; height: 28px; }
.body li a { padding-bottom: 3px; }
.body b { font-weight: 500; }
.body li span { color: #5c6270; }
.practice { height: 45px; padding: 0 17px 1px; border-radius: 23px; background: #212529; color: #fff; font-size: 16px; font-weight: 700; }

.scrollbar { width: 21px; background: #f0f0f0; display: flex; flex-direction: column; align-items: center; padding: 9px 2px; }
.scrollbar svg { width: 10px; height: 6px; }
.track { flex: 1; align-self: stretch; padding-top: 278px; }
.thumb { height: 239px; background: #c1c1c1; }

/* Taskbar */
.taskbar { flex: none; display: flex; align-items: center; height: 60px; padding-bottom: 1px; border-top: 2px solid #a5bfb3; background: #c5eedc; color: #1c1c1c; }
.weather { flex: 1; display: flex; align-items: center; gap: 9px; padding-left: 25px; font-size: 15px; }
.weather span, .clock span { display: block; }
.sub { color: #4c5f56; }
.apps { display: flex; align-items: center; }
.app { width: 55px; height: 48px; position: relative; }
.app > svg { width: 30px; height: 30px; }
.tasksearch { display: flex; align-items: center; gap: 13px; width: 272px; height: 39px; margin: 0 5px; padding: 0 13px; border: 1px solid #afdac8; border-radius: 20px; background: #edf9f5; }
.tasksearch input { flex: 1; font-size: 16px; }
.tasksearch input::placeholder { color: #58625e; opacity: 1; }
.count { position: absolute; right: 6px; top: 2px; min-width: 20px; height: 20px; padding: 0 5px; border-radius: 10px; background: #0078d4; color: #fff; font-size: 14px; line-height: 20px; }
.count.wide { right: 0; }
.current::before { content: ""; position: absolute; z-index: -1; inset: 0 4px; border-radius: 5px; background: #e4f6ee; }
.current { z-index: 0; }
.app > .who { position: absolute; right: 5px; top: 3px; width: 20px; height: 20px; }
.current::after, .idle::after { content: ""; position: absolute; bottom: 0; left: 18px; width: 20px; height: 4px; border-radius: 2px; background: #0078d4; }
.idle::after { left: 23px; width: 8px; background: #6f8a7f; }
.tray { flex: 1; display: flex; align-items: center; justify-content: flex-end; gap: 19px; padding-right: 25px; }
.tray svg { width: 20px; height: 20px; }
.status { display: flex; gap: 10px; }
.clock { text-align: right; margin: 0 -10px 0 1px; font-size: 15px; }
```
